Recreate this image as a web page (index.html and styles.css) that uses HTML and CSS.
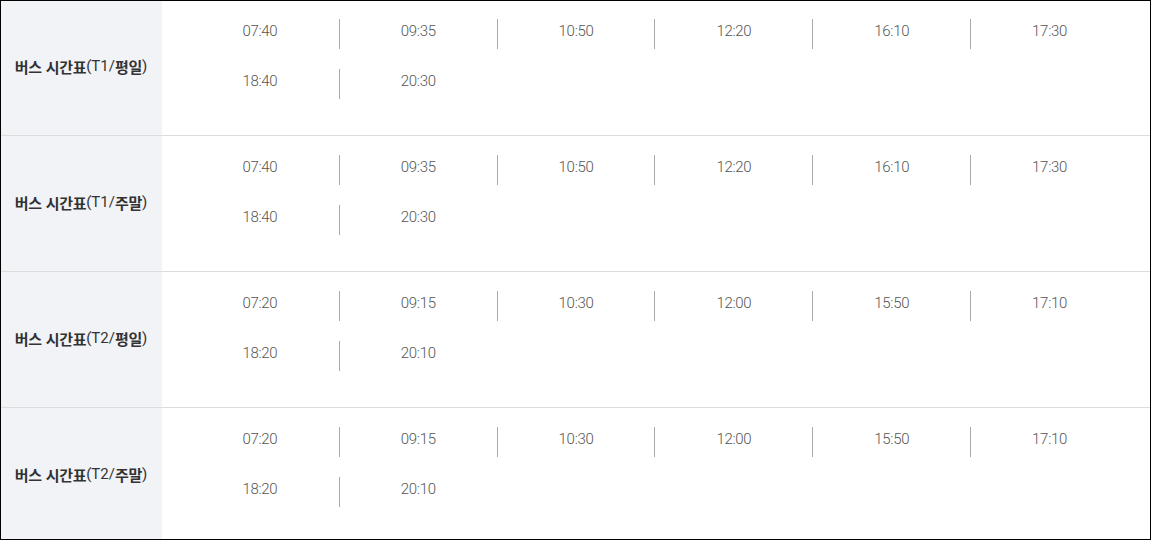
FILE: index.html
```html
<!DOCTYPE html>
<html lang="ko">
<head>
<meta charset="utf-8">
<title>버스 시간표</title>
<link rel="stylesheet" href="styles.css">
</head>
<body>
<div class="table">
  <div class="row">
    <div class="label">버스 시간표<span class="lat">(T1/</span>평일<span class="lat">)</span></div>
    <ul class="times">
      <li>07:40</li><li>09:35</li><li>10:50</li><li>12:20</li><li>16:10</li><li>17:30</li>
      <li>18:40</li><li>20:30</li>
    </ul>
  </div>
  <div class="row">
    <div class="label">버스 시간표<span class="lat">(T1/</span>주말<span class="lat">)</span></div>
    <ul class="times">
      <li>07:40</li><li>09:35</li><li>10:50</li><li>12:20</li><li>16:10</li><li>17:30</li>
      <li>18:40</li><li>20:30</li>
    </ul>
  </div>
  <div class="row">
    <div class="label">버스 시간표<span class="lat">(T2/</span>평일<span class="lat">)</span></div>
    <ul class="times">
      <li>07:20</li><li>09:15</li><li>10:30</li><li>12:00</li><li>15:50</li><li>17:10</li>
      <li>18:20</li><li>20:10</li>
    </ul>
  </div>
  <div class="row">
    <div class="label">버스 시간표<span class="lat">(T2/</span>주말<span class="lat">)</span></div>
    <ul class="times">
      <li>07:20</li><li>09:15</li><li>10:30</li><li>12:00</li><li>15:50</li><li>17:10</li>
      <li>18:20</li><li>20:10</li>
    </ul>
  </div>
</div>
</body>
</html>
```
FILE: styles.css
```css
html, body {
  margin: 0;
  padding: 0;
  background: #fff;
}
.table {
  width: 1151px;
  height: 540px;
  overflow: hidden;
  outline: 1px solid #000;
  outline-offset: -1px;
  font-family: Roboto, "Noto Sans CJK KR", sans-serif;
}
.row {
  display: flex;
  height: 135px;
  border-bottom: 1px solid #dcdcdc;
  flex: none;
}
.label {
  width: 162px;
  flex: none;
  background: #f2f3f7;
  display: flex;
  align-items: center;
  justify-content: center;
  font-family: "Noto Sans CJK KR", sans-serif;
  font-weight: 700;
  font-size: 15px;
  letter-spacing: -0.3px;
  color: #333;
  white-space: nowrap;
  padding-bottom: 3px;
  box-sizing: border-box;
}
.label .lat {
  font-family: Roboto, sans-serif;
  font-weight: 400;
  letter-spacing: 0;
}
.times {
  flex: 1;
  margin: 0;
  list-style: none;
  padding: 19px 23px 0 19px;
  display: grid;
  grid-template-columns: repeat(6, 1fr);
  grid-auto-rows: 30px;
  row-gap: 20px;
  align-content: start;
}
.times li {
  height: 30px;
  line-height: 25px;
  text-align: center;
  font-size: 15px;
  font-weight: 300;
  letter-spacing: -0.3px;
  color: #555;
}
.times li:not(:nth-child(6n+1)) {
  border-left: 1px solid #aaa;
}
```
